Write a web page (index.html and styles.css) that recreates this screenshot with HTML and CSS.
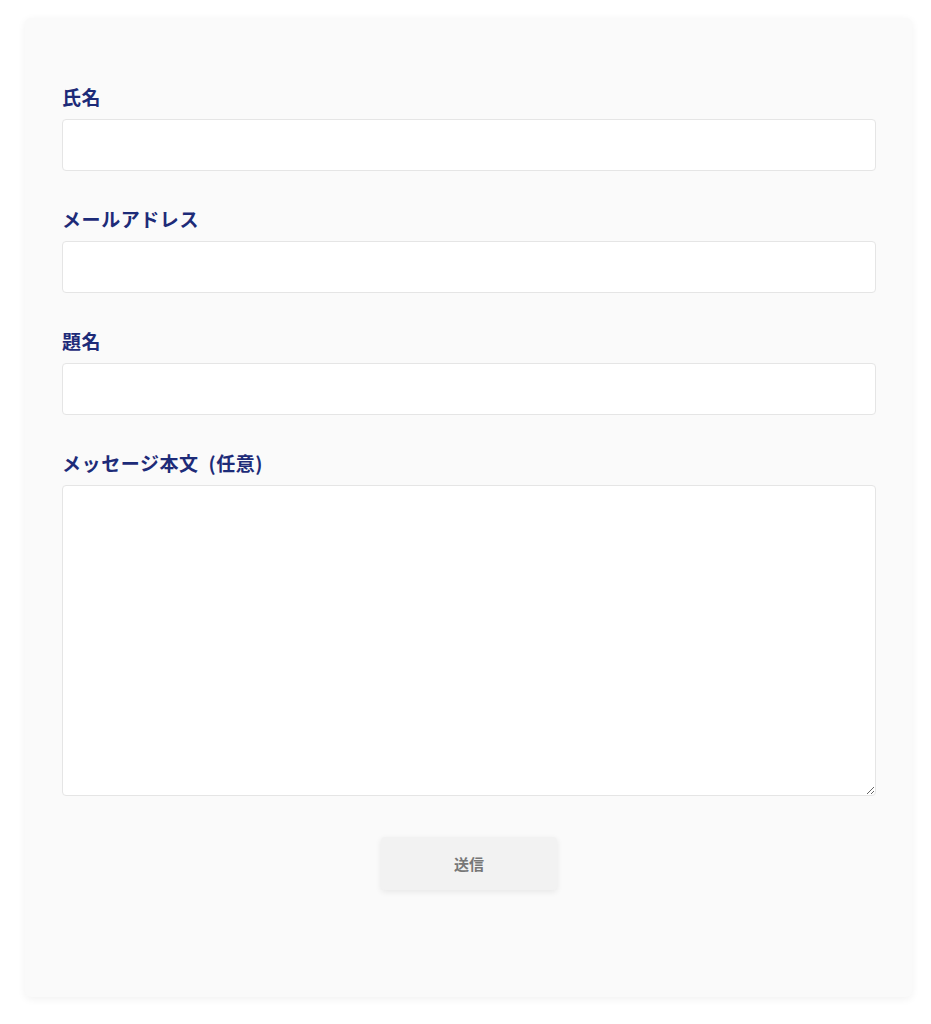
FILE: index.html
```html
<!DOCTYPE html>
<html lang="ja">

<head>
    <meta charset="UTF-8">
    <meta name="viewport" content="width=device-width, initial-scale=1.0">
    <title>お問い合わせ</title>
    <link rel="stylesheet" href="styles.css">
</head>

<body>
    <form class="contact-form">
        <label class="field">
            <span class="field-label">氏名</span>
            <input class="field-input" type="text" name="name">
        </label>

        <label class="field">
            <span class="field-label">メールアドレス</span>
            <input class="field-input" type="email" name="email">
        </label>

        <label class="field">
            <span class="field-label">題名</span>
            <input class="field-input" type="text" name="subject">
        </label>

        <label class="field">
            <span class="field-label">メッセージ本文&nbsp; (任意)</span>
            <textarea class="field-input field-textarea" name="message"></textarea>
        </label>

        <div class="actions">
            <button class="submit-button" type="submit">送信</button>
        </div>
    </form>
</body>

</html>
```

FILE: styles.css
```css
body {
    font-family: "Noto Sans CJK JP", "Noto Sans", sans-serif;
    background-color: #ffffff;
    margin: 0;
    padding: 18px 19px 26px 25px;
}

.contact-form {
    background-color: #fafafa;
    border-radius: 6px;
    box-shadow: 0 2px 8px rgba(0, 0, 0, 0.06);
    padding: 65px 36px 107px 37px;
    display: flex;
    flex-direction: column;
}

.field {
    display: flex;
    flex-direction: column;
    margin-bottom: 34px;
}

.field-label {
    font-size: 19px;
    font-weight: bold;
    line-height: 27px;
    letter-spacing: 0.03em;
    color: #1d2b78;
    margin-bottom: 9px;
}

.field-input {
    height: 52px;
    box-sizing: border-box;
    border: 1px solid #e5e5e5;
    border-radius: 4px;
    background-color: #ffffff;
    padding: 10px 14px;
    font-family: inherit;
    font-size: 16px;
}

.field-textarea {
    height: 311px;
    resize: vertical;
}

.actions {
    display: flex;
    justify-content: center;
    margin-top: 7px;
}

.submit-button {
    width: 176px;
    height: 53px;
    border: none;
    border-radius: 4px;
    background-color: #f2f2f2;
    color: #777777;
    font-family: inherit;
    font-size: 15px;
    font-weight: bold;
    box-shadow: 0 2px 6px rgba(0, 0, 0, 0.08);
}
```
